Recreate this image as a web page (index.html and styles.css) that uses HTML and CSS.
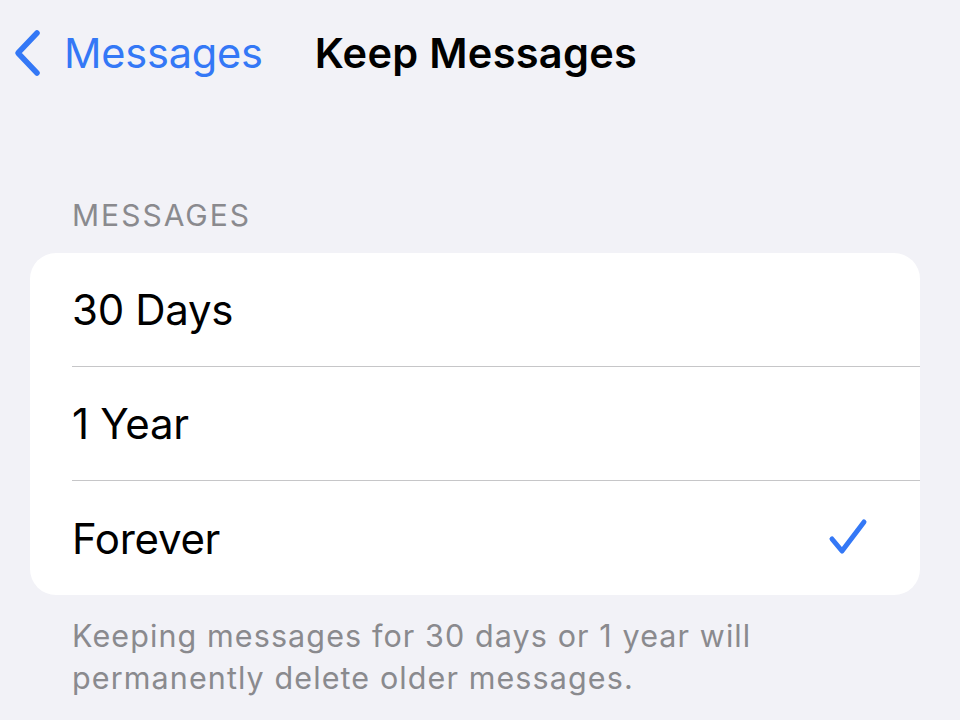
FILE: index.html
```html
<!DOCTYPE html>
<html>
<head>
<meta charset="utf-8">
<link rel="stylesheet" href="styles.css">
</head>
<body>
<div class="screen">
  <header class="nav">
    <a class="back">
      <svg class="chev" width="30" height="48" viewBox="0 0 30 48"><path d="M25 4 L6 24 L25 44" fill="none" stroke="#3478f6" stroke-width="5.5" stroke-linecap="round" stroke-linejoin="round"/></svg>
      <span class="back-label">Messages</span>
    </a>
    <h1 class="title">Keep Messages</h1>
  </header>
  <section class="group">
    <div class="group-header">MESSAGES</div>
    <div class="card">
      <div class="row"><span class="row-label">30 Days</span></div>
      <div class="row"><span class="row-label">1 Year</span></div>
      <div class="row"><span class="row-label">Forever</span>
        <svg class="check" width="40" height="40" viewBox="0 0 40 40"><path d="M4 21 L14 33 L36 4" fill="none" stroke="#3478f6" stroke-width="5" stroke-linecap="round" stroke-linejoin="round"/></svg>
      </div>
    </div>
    <p class="group-footer">Keeping messages for 30 days or 1 year will permanently delete older messages.</p>
  </section>
</div>
</body>
</html>
```
FILE: styles.css
```css
html, body {
  margin: 0;
  padding: 0;
  background: #f2f2f7;
}
body {
  font-family: Inter, "Noto Sans", sans-serif;
  width: 960px;
  height: 720px;
  overflow: hidden;
}
.nav {
  display: flex;
  align-items: center;
  height: 106px;
  padding-left: 12px;
}
.back {
  display: flex;
  align-items: center;
  color: #3478f6;
}
.chev {
  display: block;
}
.back-label {
  margin-left: 22px;
  font-size: 41.5px;
  letter-spacing: -0.2px;
  color: #3478f6;
}
.title {
  margin: 0 0 0 52px;
  font-size: 41.5px;
  font-weight: 600;
  color: #000;
  letter-spacing: 0.3px;
}
.group {
  padding: 0 40px 0 30px;
}
.group-header {
  margin-top: 91px;
  padding-left: 42px;
  font-size: 30px;
  letter-spacing: 2px;
  color: #8a8a8e;
  line-height: 36px;
  margin-bottom: 20px;
}
.card {
  background: #fff;
  border-radius: 26px;
  overflow: hidden;
}
.row {
  display: flex;
  align-items: center;
  justify-content: space-between;
  height: 114px;
  margin-left: 42px;
  padding-right: 52px;
  border-bottom: 1.5px solid #c6c6c8;
  box-sizing: border-box;
}
.row:last-child {
  border-bottom: none;
}
.row-label {
  font-size: 42px;
  color: #000;
  letter-spacing: -0.3px;
}
.check {
  display: block;
}
.group-footer {
  margin: 20px 0 0 0;
  padding-left: 42px;
  padding-right: 100px;
  font-size: 30.5px;
  letter-spacing: 1.1px;
  line-height: 42px;
  color: #8a8a8e;
}
```
